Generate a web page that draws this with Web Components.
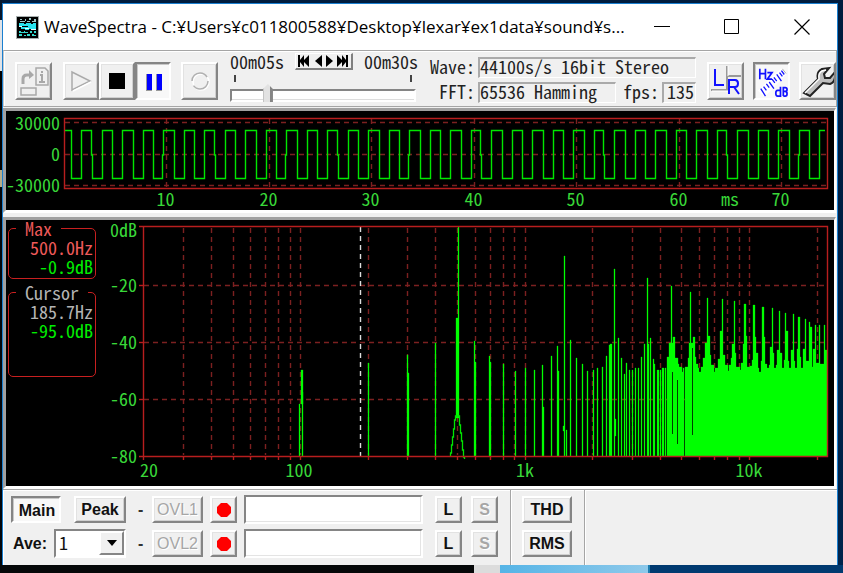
<!DOCTYPE html>
<html lang="en">
<head>
<meta charset="utf-8">
<title>WaveSpectra</title>
<style>
  :root {
    --face: #f0f0f0;
    --mono: "Noto Sans CJK JP", "Liberation Mono", monospace;
    --ui: "Liberation Sans", Arial, sans-serif;
  }
  html { height: 100%; }
  body {
    margin: 0;
    box-sizing: border-box;
    min-height: 100vh;
    padding: 3px 5px 8px 2px;
    display: flex;
    background:
      linear-gradient(90deg, #060809 474px, #dcdcdc 474px 500px, #55b4e6 500px, #8ec9ea 648px, #1c7db0 648px 650px, #003a70 650px) 0 100% / 100% 8px no-repeat,
      linear-gradient(#06172c 20px, #dfe3e8 20px 71px, #000 71px 170px, #b5ad8c 170px 187px, #02060c 187px) 0 0 / 2px 100% no-repeat,
      linear-gradient(#001c3e, #00244c);
  }
</style>
</head>
<body>
<app-window></app-window>

<script>
function define(name, html, setup) {
  const template = document.createElement('template');
  template.innerHTML = html;
  customElements.define(name, class extends HTMLElement {
    constructor() {
      super();
      this.attachShadow({ mode: 'open' }).append(template.content.cloneNode(true));
    }
    connectedCallback() {
      if (setup && !this.ready) { this.ready = true; setup(this, this.shadowRoot); }
    }
  });
}

/* Raised push button; "pressed" sinks it, "disabled" greys it. */
define('bevel-button', `
<style>
  :host { display: block; flex: none; width: var(--w, 27px); height: var(--h, 27px); }
  button {
    box-sizing: border-box; width: 100%; height: 100%; margin: 0; padding: 0;
    display: flex; align-items: center; justify-content: center; overflow: hidden;
    background: #f0f0f0; color: #111; border: 2px solid; border-color: #fff #858585 #858585 #fff;
    box-shadow: inset 1px 1px #e2e2e2, inset -1px -1px #d0d0d0;
    font: bold 16px/20px var(--ui); white-space: nowrap;
  }
  :host([pressed]) button {
    background: #f8f8f8; border-color: #858585 #fff #fff #858585;
    box-shadow: inset 1px 1px #c8c8c8; padding: 2px 0 0 2px;
  }
  button:disabled { color: #a6a6a6; text-shadow: 1px 1px #fff; }
  :host([thin]) button { font-weight: normal; }
</style>
<button type="button"><slot></slot></button>`, (host, root) => {
  const b = root.querySelector('button');
  b.disabled = host.hasAttribute('disabled');
  if (host.hasAttribute('label')) b.setAttribute('aria-label', host.getAttribute('label'));
  if (host.hasAttribute('pressed')) b.setAttribute('aria-pressed', 'true');
});

define('title-bar', `
<style>
  :host { display: flex; align-items: center; height: 46px; background: #fff; color: #000; padding-left: 13px; }
  .icon { width: 23px; height: 23px; flex: none; }
  h1 { flex: 1; min-width: 0; margin: 0 0 0 5px; font: 17px/24px "Open Sans", "Noto Sans", sans-serif;
       white-space: nowrap; }
  button { width: 70px; height: 46px; padding: 0; border: 0; background: none; display: grid; place-items: center; flex: none; }
</style>
<svg class="icon" viewBox="0 0 23 23" shape-rendering="crispEdges">
  <rect width="23" height="23" fill="#a8b0b0"/><rect x="1" y="1" width="21" height="21" fill="#000"/>
  <path d="M4 3h2v1h-2zM9 3h1v2h-1zM13 2h2v2h-2zM18 3h2v2h-2zM4 5h5v1h-5zM11 5h3v1h-3zM16 5h4v1h-4z" fill="#9cc9c9"/>
  <path d="M3 7h5v1h2v-1h5v1h2v-1h3v3h-17zM5 11h7v-1h8v3h-7v1h-4v-1h-4z" fill="#27e3ef"/>
  <path d="M3 10h3v1h-3zM9 12h4v1h-4zM15 13h5v1h-5z" fill="#e8ffff"/>
  <path d="M3 15h2v1h3v-1h1v1h3v1h-9zM14 15h2v2h-2zM18 15h2v2h-2zM3 18h3v2h-3zM8 19h2v1h-2zM11 18h3v2h-3zM16 18h2v1h2v1h-4z" fill="#35d9cf"/>
</svg>
<h1><slot></slot></h1>
<button type="button" aria-label="Minimize"><svg width="16" height="16"><path d="M0 7.5h16" stroke="#000"/></svg></button>
<button type="button" aria-label="Maximize"><svg width="16" height="16"><path d="M.5.5h14v14h-14z" fill="none" stroke="#000"/></svg></button>
<button type="button" aria-label="Close"><svg width="16" height="16"><path d="M.5.5l15 15M15.500.5l-15 15" fill="none" stroke="#000" stroke-width="1.200"/></svg></button>`);

define('seek-panel', `
<style>
  :host { display: block; width: 188px; flex: none; font: 18px/18px var(--mono); font-feature-settings: "hwid"; color: #222; }
  .top { display: flex; justify-content: space-between; align-items: center; height: 20px; }
  .strip { display: flex; height: 17px; box-sizing: border-box; border: 1px solid; border-color: #fff #808080 #808080 #fff; border-width: 1px 2px 2px 1px; padding: 0 1px; }
  .strip button { border: 0; padding: 0; background: none; display: block; line-height: 0; }
  svg { display: block; }
  .ticks { display: flex; justify-content: space-between; padding: 4px 6px 5px 4px; }
  .ticks i { width: 2px; height: 7px; background: #444; }
  input { -webkit-appearance: none; appearance: none; display: block; width: 186px; height: 17px; margin: 0; background: none; }
  input::-webkit-slider-runnable-track {
    box-sizing: border-box; height: 13px; background: #fff; border: 2px solid; border-color: #858585 #fff #fff #858585; box-shadow: inset 0 -1px #ddd;
  }
  input::-webkit-slider-thumb {
    -webkit-appearance: none; width: 10px; height: 18px; margin-top: -7px;
    background: linear-gradient(90deg, #c4c4c4 1px, #e2e2e2 1px 7px, #858585 7px);
    clip-path: polygon(0 5px, 5px 0, 10px 5px, 10px 100%, 0 100%);
  }
</style>
<div class="top"><span>00m05s</span>
  <div class="strip">
    <button type="button" aria-label="To start"><svg width="17" height="14"><path d="M1 1h2v5l4-5v5l5-5v12l-5-5v5l-4-5v5h-2z"/></svg></button>
    <button type="button" aria-label="Back"><svg width="10" height="14"><path d="M8 1v12l-7-6z"/></svg></button>
    <button type="button" aria-label="Forward"><svg width="10" height="14"><path d="M2 1v12l7-6z"/></svg></button>
    <button type="button" aria-label="To end"><svg width="16" height="14"><path d="M14 1h-2v5l-4-5v5l-5-5v12l5-5v5l4-5v5h2z"/></svg></button>
  </div>
  <span>00m30s</span></div>
<div class="ticks"><i></i><i></i></div>
<input type="range" min="0" max="100" value="18" aria-label="Position">`);

define('info-panel', `
<style>
  :host { display: grid; grid-template-columns: auto 138px 1fr 34px; row-gap: 4px; width: 266px; flex: none;
          font: 18px/18px var(--mono); font-feature-settings: "hwid"; color: #222; }
  .k { text-align: right; padding: 0 3px 0 0; }
  .v { box-sizing: border-box; height: 21px; border: 1px solid; border-width: 2px 1px 1px 2px; border-color: #aaa #fff #fff #aaa; white-space: pre; line-height: 15px; }
  .wide { grid-column: span 3; }
  .r { text-align: right; padding-right: 1px; }
</style>
<span class="k">Wave:</span><span class="v wide">44100s/s 16bit Stereo</span>
<span class="k">FFT:</span><span class="v">65536 Hamming</span><span class="k">fps:</span><span class="v r">135</span>`);

define('tool-bar', `
<style>
  :host { display: flex; align-items: flex-start; height: 57px; box-sizing: border-box; background: var(--face);
          border: 1px solid #a5a5a5; border-left-color: #c8c8c8; box-shadow: inset 1px 1px #fff; padding-left: 11px; --w: 37px; --h: 38px; }
  bevel-button { margin-top: 11px; }
  .group { display: flex; margin: 0 10px 0 11px; --w: 36px; }
  seek-panel { margin-left: 12px; }
  info-panel { margin: 6px 11px 0 12px; }
  .right { display: flex; gap: 9px; }
  svg { display: block; }
</style>
<bevel-button disabled label="Open"><svg width="31" height="32" fill="none" stroke="#a8a8a8" stroke-width="1.500">
  <path d="M3 23h15v7h-15zM18 3h9l3 3v14h-12z"/><path d="M5 19v-5q0-4 4-4h3" stroke-width="3"/><path d="M11 5l5 5l-5 4z" fill="#a8a8a8" stroke="none"/><path d="M24 6v2M22 10h2v7M21 17h6" stroke-width="2"/></svg></bevel-button>
<div class="group">
  <bevel-button disabled label="Play"><svg width="22" height="22" fill="none" stroke="#aaa" stroke-width="1.500"><path d="M2 2v18l18-9z"/><path d="M3 21l18-9" stroke="#fff"/></svg></bevel-button>
  <bevel-button label="Stop"><svg width="16" height="16"><rect width="16" height="16"/></svg></bevel-button>
  <bevel-button pressed label="Pause"><svg width="18" height="18"><path d="M1 1h6v17h-6zM11 1h6v17h-6z" fill="#999"/><path d="M2 1h5v16h-5zM12 1h5v16h-5z" fill="#00f"/></svg></bevel-button>
</div>
<bevel-button disabled label="Record"><svg width="22" height="22" fill="none"><circle cx="12" cy="12" r="8" stroke="#fff" stroke-width="1.500"/><circle cx="11" cy="11" r="8" stroke="#b0b0b0" stroke-width="1.500" stroke-dasharray="20 5 21 5"/></svg></bevel-button>
<seek-panel></seek-panel>
<info-panel></info-panel>
<div class="right">
  <bevel-button label="Left and right channels"><svg width="33" height="34" fill="none">
    <path d="M18 2v24h-16M18 12h14" stroke="#999" stroke-width="2"/><path d="M19 2v10M3 27h16" stroke="#fff"/><path d="M6 5v16h9M20 30v-14h6q3 0 3 3.500t-3 3.500h-6M25 23l5 7" stroke="#11f" stroke-width="2"/></svg></bevel-button>
  <bevel-button pressed label="Hz and dB scale"><svg width="33" height="34" viewBox="0 0 33 34" fill="none" stroke="#11f">
    <path d="M1 26L26 2l6 6L8 33z" fill="#fff" stroke="none"/>
    <path d="M3 3v11M9 3v11M3 8h6M11 7h5l-5 7h5" stroke-width="1.800"/>
    <path d="M4 24l5 8M7 22l3 4M10 19l3 4M13 17l5 7M16 14l3 4M18 12l3 4M21 9l5 7M24 7l3 4M26 5l3 4" stroke-width="1.400"/>
    <path d="M27 3l4 5" stroke="#aaa"/>
    <path d="M25 22v10h-3q-2 0-2-3t2-3h3M28 22v10M28 23h2q2 0 2 2t-2 2h-2M30 27q2 0 2 2.500t-2 2.500h-2" stroke-width="1.800"/></svg></bevel-button>
  <bevel-button label="Settings"><svg width="36" height="34">
    <path d="M3 29l14-14q-2-7 4-10l7-1l-5 6l1 4l5 0l5-6q1 10-5 12l-7-1l-13 13z" fill="#bdbdbd" stroke="#222" stroke-width="2"/>
    <path d="M4 29l14-14q-1-6 3-8l4-1" fill="none" stroke="#fff" stroke-width="1.500"/></svg></bevel-button>
</div>`);

const NS = 'http://www.w3.org/2000/svg';
function add(svg, tag, attrs, text) {
  const e = document.createElementNS(NS, tag);
  for (const k in attrs) e.setAttribute(k, attrs[k]);
  if (text !== undefined) e.textContent = text;
  svg.append(e);
}

const PLOT_CSS = `
  :host { display: grid; box-sizing: border-box; background: #000; border: 3px solid; border-color: #a0a0a0 #fff #fff #a0a0a0; border-right-width: 2px;
          font: 18px/19px var(--mono); font-feature-settings: "hwid"; color: #39d839; margin-right: 1px; }
  svg { display: block; width: 100%; height: 100%; overflow: visible; }
  text { fill: currentColor; }
  .grid { stroke: #7c2020; stroke-width: 1.400; fill: none; }
  .frame { stroke: #b81e1e; stroke-width: 1.400; fill: none; }`;

/* Time-domain plot: 764 x 71 units, 102.5 units per 10 ms. */
define('wave-plot', `
<style>${PLOT_CSS}
  :host { grid-template: 7px 71px 21px / 58px 1fr 6px; }
  .y { grid-area: 2 / 1; } .plot { grid-area: 2 / 2; } .x { grid-area: 3 / 2; }
</style>
<svg class="y"></svg><svg class="plot" viewBox="0 0 764 71" preserveAspectRatio="none"></svg><svg class="x"></svg>`, (host, root) => {
  const y = root.querySelector('.y'), p = root.querySelector('.plot'), x = root.querySelector('.x');
  for (const [t, pos] of [['30000', 5], ['0', 36], ['-30000', 67]])
    add(y, 'text', { x: 54, y: pos / 71 * 100 + '%', dy: 7, 'text-anchor': 'end' }, t);
  for (const v of [4.5, 36.5, 67.5]) add(p, 'path', { class: 'grid', 'stroke-dasharray': '5 4', d: `M1 ${v}H763` });
  for (let i = 1; i <= 7; i++) {
    const gx = Math.floor(i * 102.5) + .5;
    add(p, 'path', { class: 'grid', 'stroke-dasharray': '5 4', d: `M${gx} 1V70` });
    add(x, 'text', { x: (gx - 1) / 764 * 100 + '%', y: 17, 'text-anchor': 'middle' }, i * 10);
  }
  add(x, 'text', { x: 666 / 764 * 100 + '%', y: 17, 'text-anchor': 'middle' }, 'ms');
  add(p, 'path', { class: 'frame', d: 'M.5.5H763.5V70.5H.5z' });
  const fall = [1, 7, 13, 20, 26, 32], rise = [4, 10, 16, 35];
  let d = 'M1 12.5';
  for (let k = 0; k < 37; k++) {
    const f = Math.round(7 + 20.5 * k) + .5, r = Math.round(17 + 20.5 * k) + .5;
    d += fall.includes(k) ? `H${f - 1}V37H${f}V60.5` : `H${f}V60.5`;
    d += rise.includes(k) ? `H${r - 1}V37H${r}V12.5` : `H${r}V12.5`;
  }
  add(p, 'path', { d: d + 'H761', stroke: '#00e600', 'stroke-width': 1.4, fill: 'none' });
});

define('read-out', `
<style>
  :host { display: block; height: var(--box); }
  fieldset { box-sizing: border-box; height: 100%; min-width: 0; margin: 0; border: 1px solid #c82020; border-radius: 5px; padding: 2px 2px 0 7px; color: #00ee00; line-height: 19px; }
  legend { padding: 0 9px; line-height: 16px; color: var(--tint); }
  div { text-align: right; }
  .hz { color: var(--tint); }
</style>
<fieldset><legend><slot name="name"></slot></legend><div class="hz"><slot name="hz"></slot></div><div><slot name="db"></slot></div></fieldset>`);

/* Spectrum: 685 x 231 units, log frequency from 20 Hz, 57 units per 20 dB. */
define('spectrum-plot', `
<style>${PLOT_CSS}
  :host { grid-template: 6px minmax(230px, 1fr) 29px / 91px 46px 1fr 6px; }
  .side { grid-area: 1 / 1 / 4; padding: 0 1px 0 2px; }
  read-out { margin-bottom: 5px; }
  .y { grid-area: 2 / 2; } .plot { grid-area: 2 / 3; } .x { grid-area: 3 / 3; }
</style>
<div class="side">
  <read-out style="--box:59px;--tint:#ef5a5a"><span slot="name">Max</span><span slot="hz">500.0Hz</span><span slot="db">-0.9dB</span></read-out>
  <read-out style="--box:93px;--tint:#b4b4b4"><span slot="name">Cursor</span><span slot="hz">185.7Hz</span><span slot="db">-95.0dB</span></read-out>
</div>
<svg class="y"></svg><svg class="plot" viewBox="0 0 685 231" preserveAspectRatio="none"></svg><svg class="x"></svg>`, (host, root) => {
  const y = root.querySelector('.y'), p = root.querySelector('.plot'), x = root.querySelector('.x');
  const fx = f => Math.floor(157.7 + 224.4 * Math.log10(f / 100));
  ['0dB', '-20', '-40', '-60', '-80'].forEach((t, i) =>
    add(y, 'text', { x: 40, y: (i ? 2 + 57 * i : 4) / 231 * 100 + '%', dy: 7, 'text-anchor': 'end' }, t));
  for (const v of [59.5, 116.5, 173.5]) {
    add(p, 'path', { class: 'grid', 'stroke-dasharray': '5 4', d: `M1 ${v}H684` });
    add(p, 'path', { class: 'frame', d: `M-4 ${v}H1` });
  }
  for (const dec of [10, 100, 1000, 10000]) for (let m = 1; m < 10; m++) {
    const f = dec * m;
    if (f < 20 || f > 22000) continue;
    const gx = fx(f) + .5;
    if (f > 20) add(p, 'path', { class: 'grid', 'stroke-dasharray': '5 4', d: `M${gx} 2V229` });
    add(p, 'path', { class: 'frame', d: `M${gx} 230V234` });
  }
  add(p, 'path', { d: 'M217.5 1V230', stroke: '#ddd', 'stroke-width': 1.4, 'stroke-dasharray': '5 4' });

  /* Single harmonics: [x, top, bottom?, width?] */
  const bars = [
    [158,144,178,2],[156,178],[159,166],[225,137],[264,129],[265,147],[292,117],[315,1,192],[313,92,192],[314,92,192],
    [331,115],[332,136],[346,130],[347,136],[360,138],[372,145],[382,142],[391,144],[399,139],[400,181],
    [408,130],[414,120],[415,145],[421,30],[420,200,205],[423,204],[427,114],[433,132],[439,138],[444,145],[450,144],
    [454,142],[459,141],[463,130],[466,119],[467,118],[468,118],[471,43],[472,193,210],[475,112],[478,132],[481,148],[483,137],[486,144],
    [489,144],[492,142],[495,142],[498,131],[501,118],[504,52],[505,118],[507,112],[510,133],[511,138],[514,144],[515,144],
    [517,144],[519,142],[520,142],[522,142],[524,131],[525,131]];
  let d = '';
  for (const [bx, t, b = 230, w = 1] of bars) d += `M${bx} ${t}h${w}V${b}h${-w}z`;
  /* Dense upper band: envelope as [x in thirds of a unit from 477, level in thirds] */
  const env = [147,383,153,212,156,383,160,366,165,430,174,447,178,455,185,470,189,460,192,720,196,455,203,430,207,383,211,230,214,383,
    220,366,224,425,229,447,234,460,238,472,243,457,250,430,255,383,260,248,264,362,269,420,273,450,281,472,286,460,294,433,301,348,
    306,253,309,420,314,450,323,468,327,450,333,430,337,388,342,257,345,415,349,455,360,465,364,443,369,388,373,266,377,362,381,455,
    390,452,395,435,400,271,404,366,409,415,414,460,418,472,422,437,427,275,431,366,435,447,440,460,447,450,450,397,455,280,458,415,
    463,460,468,450,472,405,476,289,479,415,485,460,491,435,495,293,499,348,504,437,508,460,513,405,518,298,521,437,526,460,531,402,
    535,307,539,425,544,460,549,402,554,311,557,437,567,321,570,335,575,455,580,402,585,330,588,443,598,330,601,447,612,330,615,405,620,407];
  for (let i = 0; i < env.length - 2; i += 2) {
    const a = 477 + Math.round(env[i] / 3), b = 477 + Math.round(env[i + 2] / 3), t = Math.round(env[i + 1] / 3) - 11;
    if (t < 229 && b > a) d += `M${a} ${t}H${b}V230H${a}z`;
  }
  add(p, 'path', { d, fill: '#00ff00', stroke: '#00ff00', 'stroke-width': .3 });
  add(p, 'path', { d: 'M307.500 230v-3h1v-8h1v-8h1v-8h1v-9h1v-4h4v9h1v8h1v8h1v9h1v7h1v2', fill: 'none', stroke: '#00e600', 'stroke-width': 1.3 });
  add(p, 'path', { d: 'M529 208h1V146h-1zM534 218h1V154h-1zM549 209h1V122h-1z', fill: '#003c00' });
  add(p, 'path', { class: 'frame', d: 'M.5.5H684.5V230.5H.5zM-4 .5H1M-4 230.5H1' });
  for (const [t, pos] of [['20', 6], ['100', 156], ['1k', 382], ['10k', 606]])
    add(x, 'text', { x: pos / 685 * 100 + '%', y: 20, 'text-anchor': 'middle' }, t);
});

define('overlay-controls', `
<style>
  :host { display: flex; align-items: center; height: 29px; }
  .dash { width: 6px; margin: 0 8px 0 12px; font: bold 16px/20px var(--ui); color: #333; }
  .ovl { --w: 51px; margin-right: 7px; }
  input { box-sizing: border-box; width: 179px; height: 29px; margin: 0 12px 0 7px; border: 2px solid; border-color: #858585 #fff #fff #858585;
          background: #fff; border-radius: 0; outline: 0; padding: 0 4px; font: 16px var(--ui); box-shadow: inset -1px -1px #e4e4e4; }
  .s { margin-left: 9px; }
</style>
<span class="dash">-</span>
<bevel-button class="ovl" disabled thin><slot></slot></bevel-button>
<bevel-button label="Capture overlay"><svg width="14" height="14"><path d="M4 0h6l4 4v6l-4 4h-6l-4-4v-6z" fill="#f00"/></svg></bevel-button>
<input type="text" aria-label="Overlay file">
<bevel-button>L</bevel-button><bevel-button class="s" disabled>S</bevel-button>`);

define('bottom-panel', `
<style>
  :host { display: flex; height: 76px; background: var(--face); border-top: 1px solid #a5a5a5; box-sizing: border-box; }
  section { padding: 5px 12px 0 8px; box-sizing: border-box; border-right: 1px solid #a5a5a5; box-shadow: inset 1px 1px #fff; }
  .row { display: flex; align-items: center; height: 29px; margin-bottom: 5px; }
  .left { display: flex; width: 115px; align-items: center; justify-content: space-between; flex: none; }
  .analysis { padding: 6px 12px 0 11px; --w: 50px; }
  .analysis bevel-button { margin-bottom: 7px; }
  .rest { flex: 1; border: 0; }
  label { font: bold 16px/20px var(--ui); color: #111; padding-left: 2px; }
  .combo { position: relative; width: 72px; height: 29px; }
  select { -webkit-appearance: none; appearance: none; box-sizing: border-box; width: 100%; height: 100%; margin: 0; border: 2px solid; border-color: #858585 #fff #fff #858585;
           border-radius: 0; background: #fff; padding: 0 0 4px 3px; font: 18px/20px var(--mono); font-feature-settings: "hwid"; color: #111; }
  .arrow { position: absolute; right: 2px; top: 2px; width: 25px; height: 24px; box-sizing: border-box; border: 2px solid; border-color: #fff #858585 #858585 #fff;
           background: #f0f0f0; display: grid; place-items: center; pointer-events: none; }
</style>
<section>
  <div class="row"><div class="left"><bevel-button pressed style="--w:50px">Main</bevel-button><bevel-button style="--w:52px">Peak</bevel-button></div>
    <overlay-controls>OVL1</overlay-controls></div>
  <div class="row"><div class="left"><label for="ave">Ave:</label><div class="combo"><select id="ave"><option>1</option><option>2</option><option>4</option></select>
    <span class="arrow"><svg width="10" height="6"><path d="M0 0h10l-5 6z"/></svg></span></div></div>
    <overlay-controls>OVL2</overlay-controls></div>
</section>
<section class="analysis"><bevel-button>THD</bevel-button><bevel-button>RMS</bevel-button></section>
<section class="rest"></section>`);

define('app-window', `
<style>
  :host { flex: 1; min-width: 0; display: flex; flex-direction: column; box-sizing: border-box; border: 1px solid #1a7fd0; border-bottom: 0; background: var(--face); overflow: hidden; }
  wave-plot { margin-top: 1px; }
  spectrum-plot { flex: 1; margin-top: 4px; }
</style>
<title-bar>WaveSpectra - C:¥Users¥c011800588¥Desktop¥lexar¥ex1data¥sound¥s...</title-bar>
<tool-bar></tool-bar>
<wave-plot></wave-plot>
<spectrum-plot></spectrum-plot>
<bottom-panel></bottom-panel>`);
</script>
</body>
</html>
